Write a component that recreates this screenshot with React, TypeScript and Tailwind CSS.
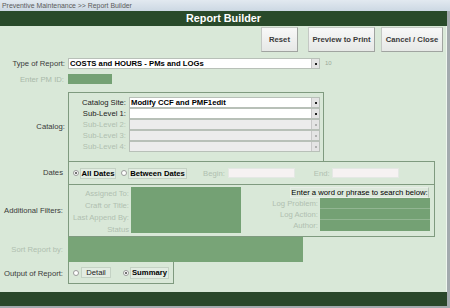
import React from "react";

const F = { fontFamily: '"Liberation Sans", Arial, sans-serif' };

function Select({ w, disabled, value }: { w: number; disabled?: boolean; value?: string }) {
  return (
    <div
      className={`flex h-[11px] items-center border border-[#b8c0b8] ${disabled ? "bg-[#ececec]" : "bg-white"}`}
      style={{ width: w }}
    >
      <div className="flex-1 overflow-hidden whitespace-nowrap pl-[1px] text-[7.7px] font-bold leading-[9px] text-black">
        {value}
      </div>
      <div className="flex h-[9px] w-[8px] items-center justify-center border-l border-[#c8c8c8] bg-[#e4e4e4]">
        <div className={`h-[2px] w-[2px] ${disabled ? "bg-[#b0b0b0]" : "bg-[#222]"}`} />
      </div>
    </div>
  );
}

function Radio({ on }: { on?: boolean }) {
  return (
    <div className="flex h-[6px] w-[6px] items-center justify-center rounded-full border border-[#9a9a9a] bg-white">
      {on && <div className="h-[2px] w-[2px] rounded-full bg-[#444]" />}
    </div>
  );
}

export default function App() {
  return (
    <div className="flex h-[308px] w-[450px] flex-col overflow-hidden bg-[#a3aaae]" style={F}>
      <div className="h-[11px] w-full bg-gradient-to-b from-[#e2e9f0] to-[#ccd8e3] pl-[2px] text-[6.9px] leading-[11px] text-[#5a5a5a]">
        Preventive Maintenance &gt;&gt; Report Builder
      </div>
      <div className="flex w-[447px] flex-col">
        <div className="flex h-[15px] items-center justify-center bg-[#294a2a] text-[10.8px] font-bold text-white">
          Report Builder
        </div>
        <div className="flex h-[266px] flex-col border-r border-[#eef5ee] bg-[#d9e8d8] text-[7.7px] leading-[9px]">
          {/* Buttons */}
          <div className="mt-[1px] flex h-[25px] justify-end pr-[3px]">
            {["Reset", "Preview to Print", "Cancel / Close"].map((t, i) => (
              <div
                key={t}
                className={`flex h-[25px] items-center justify-center border border-[#c4c8c4] border-b-[#a0a4a0] border-r-[#a0a4a0] bg-gradient-to-b from-[#f8f8f8] to-[#e6e8e6] font-bold text-[#3a3a3a] ${
                  i === 0 ? "mr-[10px] w-[37px]" : i === 1 ? "mr-[6px] w-[67px]" : "w-[62px]"
                }`}
              >
                {t}
              </div>
            ))}
          </div>

          {/* Type of report */}
          <div className="mt-[6px] flex h-[11px] items-center">
            <div className="w-[66px] pr-[1px] text-right text-[#3a3a3a]">Type of Report:</div>
            <div className="ml-[2px]">
              <Select w={252} value="COSTS and HOURS - PMs and LOGs" />
            </div>
            <div className="ml-[5px] text-[6px] text-[#9aa89a]">10</div>
          </div>

          {/* PM ID */}
          <div className="mt-[5px] flex h-[10px] items-center">
            <div className="w-[66px] pr-[2px] text-right text-[#a9b9a9]">Enter PM ID:</div>
            <div className="ml-[2px] h-[10px] w-[44px] bg-[#74a174]" />
          </div>

          {/* Catalog */}
          <div className="mt-[8px] flex h-[69px] items-center">
            <div className="w-[66px] pr-[1px] text-right text-[#3a3a3a]">Catalog:</div>
            <div className="ml-[2px] flex h-[69px] w-[256px] flex-col border-x border-t border-[#7f9a7f] pt-[4px]">
              {[
                ["Catalog Site:", false, "Modify CCF and PMF1edit"],
                ["Sub-Level 1:", false, ""],
                ["Sub-Level 2:", true, ""],
                ["Sub-Level 3:", true, ""],
                ["Sub-Level 4:", true, ""],
              ].map(([l, d, v]) => (
                <div key={l as string} className="flex h-[11px] items-center">
                  <div
                    className={`w-[57px] text-right ${d ? "text-[#b0bfb0]" : "text-[#222]"}`}
                  >
                    {l as string}
                  </div>
                  <div className="ml-[3px]">
                    <Select w={191} disabled={d as boolean} value={v as string} />
                  </div>
                </div>
              ))}
            </div>
          </div>

          {/* Dates + filters */}
          <div className="flex h-[76px]">
            <div className="flex w-[66px] flex-col">
              <div className="flex h-[23px] items-center justify-end pr-[3px] text-[#3a3a3a]">Dates</div>
              <div className="flex h-[53px] items-center justify-end pr-[3px] text-[#3a3a3a]">
                Additional Filters:
              </div>
            </div>
            <div className="ml-[2px] flex h-[76px] w-[367px] flex-col border border-[#7f9a7f]">
              <div className="flex h-[23px] items-center border-b border-[#7f9a7f] pl-[4px]">
                <Radio on />
                <div className="ml-[1px] flex h-[11px] w-[36px] items-center justify-center border border-[#c4d2c4] bg-[#e2ece2] font-bold text-black">
                  All Dates
                </div>
                <div className="ml-[5px]">
                  <Radio />
                </div>
                <div className="ml-[1px] flex h-[11px] w-[59px] items-center justify-center border border-[#c4d2c4] bg-[#e2ece2] font-bold text-black">
                  Between Dates
                </div>
                <div className="ml-[16px] text-[#b0bfb0]">Begin:</div>
                <div className="ml-[3px] h-[10px] w-[67px] border border-[#e4e8e4] bg-[#f6f2f2]" />
                <div className="ml-[19px] text-[#b0bfb0]">End:</div>
                <div className="ml-[2px] h-[10px] w-[67px] border border-[#e4e8e4] bg-[#f6f2f2]" />
              </div>
              <div className="flex h-[51px]">
                <div className="flex w-[60px] flex-col pt-[3px] text-right text-[#b0bfb0]">
                  <div className="h-[12px] leading-[12px]">Assigned To:</div>
                  <div className="h-[12px] leading-[12px]">Craft or Title:</div>
                  <div className="h-[12px] leading-[12px]">Last Append By:</div>
                  <div className="h-[12px] leading-[12px]">Status</div>
                </div>
                <div className="ml-[2px] mt-[2px] h-[46px] w-[110px] bg-[#74a174]" />
                <div className="ml-[48px] flex flex-col pt-[2px]">
                  <div className="ml-[1px] flex h-[11px] w-[139px] items-center justify-center border border-[#e8eee8] border-r-[#b8c4b8] bg-[#dde9dc] text-black">
                    Enter a word or phrase to search below:
                  </div>
                  {["Log Problem:", "Log Action:", "Author:"].map((l, i) => (
                    <div key={l} className="ml-[-50px] flex h-[11px] items-center">
                      <div className="w-[81px] pr-[2px] text-right text-[#b0bfb0]">{l}</div>
                      <div
                        className={`h-[11px] w-[110px] bg-[#74a174] ${i < 2 ? "border-b border-[#92b692]" : ""}`}
                      />
                    </div>
                  ))}
                </div>
              </div>
            </div>
          </div>

          {/* Sort */}
          <div className="flex h-[25px] items-center">
            <div className="w-[66px] pr-[3px] text-right text-[#b0bfb0]">Sort Report by:</div>
            <div className="ml-[2px] h-[25px] w-[235px] bg-[#78a477]" />
          </div>

          {/* Output */}
          <div className="flex h-[22px] items-center">
            <div className="w-[66px] pr-[3px] text-right text-[#3a3a3a]">Output of Report:</div>
            <div className="ml-[2px] flex h-[22px] w-[106px] items-center border border-t-0 border-[#7f9a7f] pl-[4px]">
              <Radio />
              <div className="ml-[2px] flex h-[11px] w-[30px] items-center justify-center border border-[#c4d2c4] bg-[#e2ece2] text-[#222]">
                Detail
              </div>
              <div className="ml-[12px]">
                <Radio on />
              </div>
              <div className="ml-[1px] flex h-[12px] w-[39px] items-center justify-center border border-[#c4d2c4] bg-[#e2ece2] font-bold text-black">
                Summary
              </div>
            </div>
          </div>
        </div>
        <div className="h-[14px] bg-[#2a472a]" />
      </div>
    </div>
  );
}
